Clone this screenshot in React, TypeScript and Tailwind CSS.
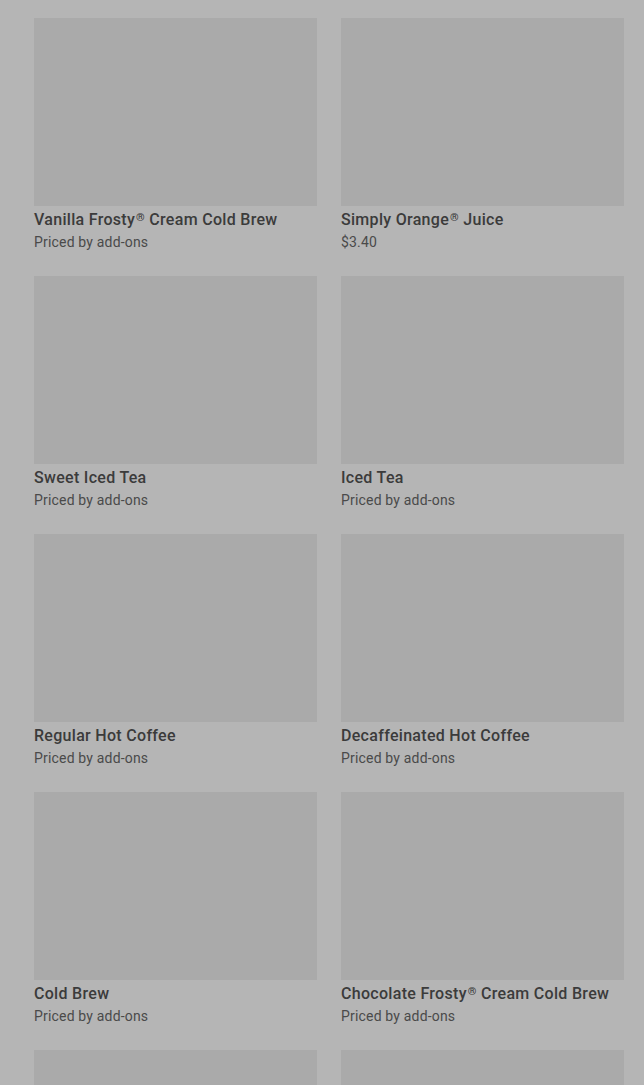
const items = [
  { name: 'Vanilla Frosty', reg: true, rest: ' Cream Cold Brew', price: 'Priced by add-ons' },
  { name: 'Simply Orange', reg: true, rest: ' Juice', price: '$3.40' },
  { name: 'Sweet Iced Tea', price: 'Priced by add-ons' },
  { name: 'Iced Tea', price: 'Priced by add-ons' },
  { name: 'Regular Hot Coffee', price: 'Priced by add-ons' },
  { name: 'Decaffeinated Hot Coffee', price: 'Priced by add-ons' },
  { name: 'Cold Brew', price: 'Priced by add-ons' },
  { name: 'Chocolate Frosty', reg: true, rest: ' Cream Cold Brew', price: 'Priced by add-ons' },
];

export default function App() {
  return (
    <div className="h-[1085px] overflow-hidden bg-[#b5b5b5] font-['Roboto',sans-serif]">
      <div className="pl-[34px] pr-[20px] pt-[18px] grid grid-cols-2 gap-x-[24px] gap-y-[24px]">
        {items.map((item) => (
          <div key={item.name}>
            <div className="h-[188px] bg-[#aaaaaa]" />
            <div className="mt-[4px] h-5 text-[16px] leading-5 font-medium tracking-[0.3px] text-[#3b3b3b] whitespace-nowrap">
              {item.name}
              {item.reg && <span className="relative -top-[4px] ml-[1px] text-[11px] leading-[0] font-bold">®</span>}
              {item.rest}
            </div>
            <div className="mt-[2px] text-[14px] leading-5 tracking-[0.18px] text-[#4a4a4a]">{item.price}</div>
          </div>
        ))}
        <div className="h-[188px] bg-[#aaaaaa]" />
        <div className="h-[188px] bg-[#aaaaaa]" />
      </div>
    </div>
  );
}
